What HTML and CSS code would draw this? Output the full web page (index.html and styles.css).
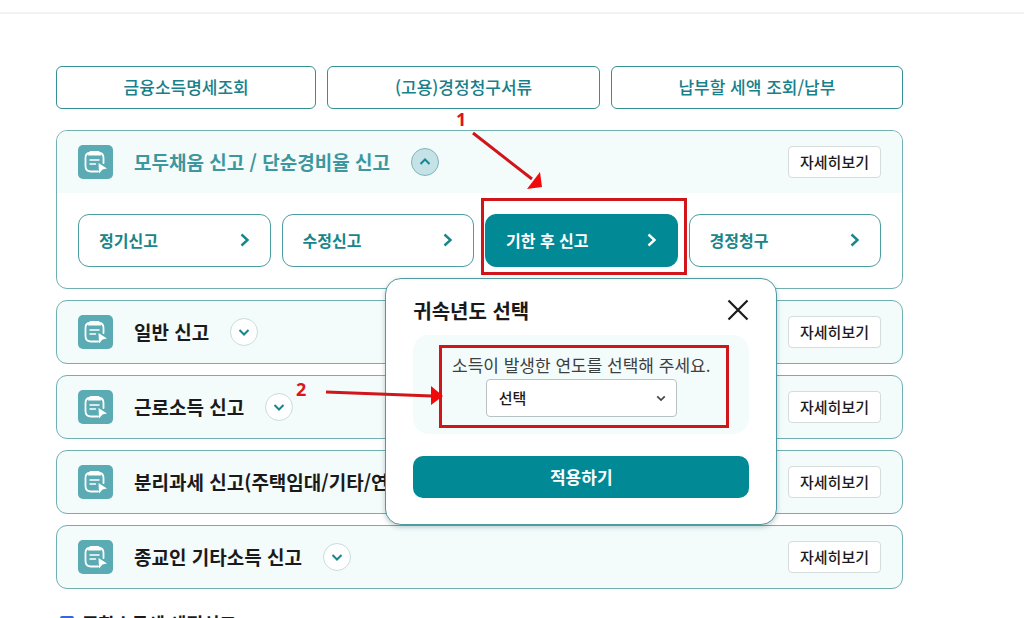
FILE: index.html
```
<!DOCTYPE html>
<html lang="ko">
<head>
    <meta charset="UTF-8">
    <meta name="viewport" content="width=device-width, initial-scale=1.0">
    <title>종합소득세 신고</title>
    <link rel="stylesheet" href="styles.css">
</head>
<body>
    <!-- Shared icons -->
    <svg width="0" height="0" class="sprite" aria-hidden="true">
        <symbol id="icon-report" viewBox="0 0 35 34">
            <path d="M12 8 Q7.500 8 7.500 13 V21 Q7.500 26.500 13 26.500 H20" fill="none" stroke="#fff" stroke-width="1.800" stroke-linecap="round"/>
            <path d="M21 8 Q25.500 8 25.500 13 V18" fill="none" stroke="#fff" stroke-width="1.800" stroke-linecap="round"/>
            <path d="M12.500 6 H20.500 Q22.500 6.500 23 10.500 H10 Q10.500 6.500 12.500 6 Z" fill="#fff"/>
            <path d="M12 15 H21 M12 19 H17.500" stroke="#fff" stroke-width="1.500" stroke-linecap="round"/>
            <path d="M20.500 18 L29 23.500 L24.500 24.500 L21 28.500 Z" fill="#fff"/>
        </symbol>
        <symbol id="icon-chevron" viewBox="0 0 12 12">
            <path d="M1.500 4 L6 8.500 L10.500 4" fill="none" stroke="currentColor" stroke-width="2"/>
        </symbol>
        <symbol id="icon-arrow" viewBox="0 0 10 14">
            <path d="M1.500 1.500 L7.500 7 L1.500 12.500" fill="none" stroke="currentColor" stroke-width="2.400"/>
        </symbol>
    </svg>

    <header class="top-line"></header>
    <main class="container">
        <nav class="quick-links">
            <button type="button">금융소득명세조회</button>
            <button type="button">(고용)경정청구서류</button>
            <button type="button">납부할 세액 조회/납부</button>
        </nav>

        <div class="report-list">
            <section class="card card-open">
                <div class="card-head">
                    <svg class="card-icon"><use href="#icon-report"/></svg>
                    <h2>모두채움 신고 / 단순경비율 신고</h2>
                    <button type="button" class="toggle" aria-label="접기"><svg><use href="#icon-chevron"/></svg></button>
                    <button type="button" class="detail">자세히보기</button>
                </div>
                <div class="card-body">
                    <button type="button" class="report-btn">정기신고<svg><use href="#icon-arrow"/></svg></button>
                    <button type="button" class="report-btn">수정신고<svg><use href="#icon-arrow"/></svg></button>
                    <div class="report-item">
                        <button type="button" class="report-btn active">기한 후 신고<svg><use href="#icon-arrow"/></svg></button>

                        <!-- Year popup, hangs under the selected button -->
                        <div class="popup" role="dialog" aria-labelledby="popupTitle">
                            <div class="popup-head">
                                <h3 id="popupTitle">귀속년도 선택</h3>
                                <button type="button" class="close" aria-label="닫기">
                                    <svg viewBox="0 0 22 22"><path d="M1.500 1.500 L20.500 20.500 M20.500 1.500 L1.500 20.500" stroke="currentColor" stroke-width="2.200"/></svg>
                                </button>
                            </div>
                            <div class="popup-body">
                                <label for="year">소득이 발생한 연도를 선택해 주세요.</label>
                                <div class="select-box">
                                    <select id="year">
                                        <option>선택</option>
                                    </select>
                                    <svg><use href="#icon-chevron"/></svg>
                                </div>
                            </div>
                            <button type="button" class="apply">적용하기</button>
                        </div>

                        <!-- Guide marks for step 1 and 2 -->
                        <svg class="guide" viewBox="0 0 460 340" aria-hidden="true">
                            <g fill="none" stroke="#d0151b" stroke-width="3">
                                <rect x="202.500" y="99.500" width="203" height="74"/>
                                <rect x="160.500" y="246.500" width="287" height="80"/>
                                <path d="M193 33 L252 79 M46 292 L152 296"/>
                            </g>
                            <path d="M262 87 L247 89 L260 72 Z M163 296 L151 305 V286 Z" fill="#f00a0a"/>
                            <text x="176" y="26">1</text>
                            <text x="16" y="296">2</text>
                        </svg>
                    </div>
                    <button type="button" class="report-btn">경정청구<svg><use href="#icon-arrow"/></svg></button>
                </div>
            </section>

            <section class="card">
                <div class="card-head">
                    <svg class="card-icon"><use href="#icon-report"/></svg>
                    <h2>일반 신고</h2>
                    <button type="button" class="toggle" aria-label="펼치기"><svg><use href="#icon-chevron"/></svg></button>
                    <button type="button" class="detail">자세히보기</button>
                </div>
            </section>
            <section class="card">
                <div class="card-head">
                    <svg class="card-icon"><use href="#icon-report"/></svg>
                    <h2>근로소득 신고</h2>
                    <button type="button" class="toggle" aria-label="펼치기"><svg><use href="#icon-chevron"/></svg></button>
                    <button type="button" class="detail">자세히보기</button>
                </div>
            </section>
            <section class="card">
                <div class="card-head">
                    <svg class="card-icon"><use href="#icon-report"/></svg>
                    <h2>분리과세 신고(주택임대/기타/연금)</h2>
                    <button type="button" class="toggle" aria-label="펼치기"><svg><use href="#icon-chevron"/></svg></button>
                    <button type="button" class="detail">자세히보기</button>
                </div>
            </section>
            <section class="card">
                <div class="card-head">
                    <svg class="card-icon"><use href="#icon-report"/></svg>
                    <h2>종교인 기타소득 신고</h2>
                    <button type="button" class="toggle" aria-label="펼치기"><svg><use href="#icon-chevron"/></svg></button>
                    <button type="button" class="detail">자세히보기</button>
                </div>
            </section>
        </div>

        <h2 class="next-title">종합소득세 세정신고</h2>
    </main>
</body>
</html>
```
FILE: styles.css
```
* {
    box-sizing: border-box;
}
html {
    scrollbar-width: none;
}
body {
    margin: 0;
    background-color: #fff;
    color: #1a1a1a;
    font-family: "Noto Sans CJK KR", "Noto Sans", sans-serif;
}
h2, h3 {
    margin: 0;
}
button, select {
    font-family: inherit;
    cursor: pointer;
}
.sprite {
    position: absolute;
}
.top-line {
    height: 14px;
    border-bottom: 2px solid #f2f2f2;
}
.container {
    margin: 52px 121px 0 56px;
}

/* Top buttons */
.quick-links {
    display: flex;
    gap: 11px;
    margin-bottom: 21px;
}
.quick-links button {
    flex: 1 1 auto;
    height: 43px;
    padding: 0 16px 2px;
    border: 1px solid #358f96;
    border-radius: 6px;
    background-color: #fff;
    color: #17808a;
    font-size: 17px;
    font-weight: 500;
    white-space: nowrap;
}

/* Cards */
.report-list {
    display: grid;
    gap: 11px;
}
.card {
    border: 1px solid #6fb0b3;
    border-radius: 11px;
    background-color: #f3fbfb;
}
.card-head {
    display: flex;
    align-items: center;
    height: 62px;
    padding: 0 21px;
}
.card-icon {
    width: 35px;
    height: 34px;
    margin-right: 21px;
    border-radius: 5px;
    background-color: #5aabb3;
}
.card h2 {
    font-size: 19px;
    font-weight: 700;
    line-height: 28px;
    white-space: nowrap;
}
.toggle {
    display: grid;
    place-items: center;
    width: 28px;
    height: 28px;
    margin-left: 21px;
    padding: 0;
    border: 1px solid #c9dcdf;
    border-radius: 50%;
    background-color: #fff;
    color: #17868f;
}
.toggle svg {
    width: 12px;
    height: 12px;
}
.detail {
    height: 32px;
    margin-left: auto;
    padding: 0 11px 2px;
    border: 1px solid #d5dcdc;
    border-radius: 4px;
    background-color: #fff;
    color: #1a1a1a;
    font-size: 15px;
    font-weight: 500;
    white-space: nowrap;
}
.card-open {
    background-color: #fff;
}
.card-open .card-head {
    border-radius: 10px 10px 0 0;
    background-color: #f3fbfb;
}
.card-open h2 {
    color: #3d979e;
}
.card-open .toggle {
    border-color: #7fb5ba;
    background-color: #c5e3e6;
}
.card-open .toggle svg {
    transform: rotate(180deg);
}
.card-body {
    display: grid;
    grid-template-columns: repeat(4, 1fr);
    gap: 11px;
    padding: 21px;
}
.report-item {
    position: relative;
}
.report-btn {
    display: flex;
    align-items: center;
    justify-content: space-between;
    width: 100%;
    height: 53px;
    padding: 0 20px 2px;
    border: 1px solid #4a9da2;
    border-radius: 11px;
    background-color: #fff;
    color: #17868a;
    font-size: 16px;
    font-weight: 700;
    white-space: nowrap;
}
.report-btn svg {
    width: 10px;
    height: 14px;
}
.report-btn.active {
    border-color: #028996;
    background-color: #028996;
    color: #fff;
}

/* Popup */
.popup {
    position: absolute;
    top: 64px;
    left: 50%;
    z-index: 1;
    width: 392px;
    padding: 16px 27px 26px;
    border: 1px solid #4f9ba0;
    border-radius: 16px;
    background-color: #fff;
    box-shadow: 0 2px 5px rgba(0, 50, 50, 0.25);
    transform: translateX(-50%);
}
.popup-head {
    display: flex;
    align-items: center;
    justify-content: space-between;
    height: 30px;
    margin-bottom: 10px;
}
.popup-head h3 {
    font-size: 20px;
    font-weight: 700;
}
.close {
    display: grid;
    padding: 0;
    border: none;
    background: none;
    color: #1a1a1a;
}
.close svg {
    width: 22px;
    height: 22px;
}
.popup-body {
    display: flex;
    flex-direction: column;
    align-items: center;
    height: 99px;
    margin-bottom: 22px;
    padding-top: 16px;
    border-radius: 16px;
    background-color: #f3fbfb;
}
.popup-body label {
    color: #3c4040;
    font-size: 17px;
    line-height: 28px;
}
.select-box {
    position: relative;
    width: 191px;
}
.select-box select {
    width: 100%;
    height: 38px;
    padding: 0 12px 2px;
    border: 1px solid #b9c2c3;
    border-radius: 4px;
    background-color: #fff;
    color: #1a1a1a;
    font-size: 15px;
    font-weight: 500;
    appearance: none;
}
.select-box svg {
    position: absolute;
    top: 14px;
    right: 11px;
    width: 10px;
    height: 10px;
    color: #444;
    pointer-events: none;
}
.apply {
    width: 100%;
    height: 42px;
    padding: 0 0 2px;
    border: none;
    border-radius: 10px;
    background-color: #028996;
    color: #fff;
    font-size: 17px;
    font-weight: 700;
}

/* Guide marks */
.guide {
    position: absolute;
    top: -114px;
    left: -205px;
    z-index: 2;
    width: 460px;
    height: 340px;
    pointer-events: none;
}
.guide text {
    fill: #e0141a;
    font-family: "Noto Sans", sans-serif;
    font-size: 18px;
    font-weight: 700;
}

.next-title {
    display: flex;
    align-items: center;
    gap: 8px;
    margin-top: 20px;
    padding-left: 4px;
    font-size: 18px;
    font-weight: 700;
    line-height: 28px;
}
.next-title::before {
    content: "";
    width: 14px;
    height: 14px;
    border-radius: 2px;
    background-color: #3567d6;
}
```
